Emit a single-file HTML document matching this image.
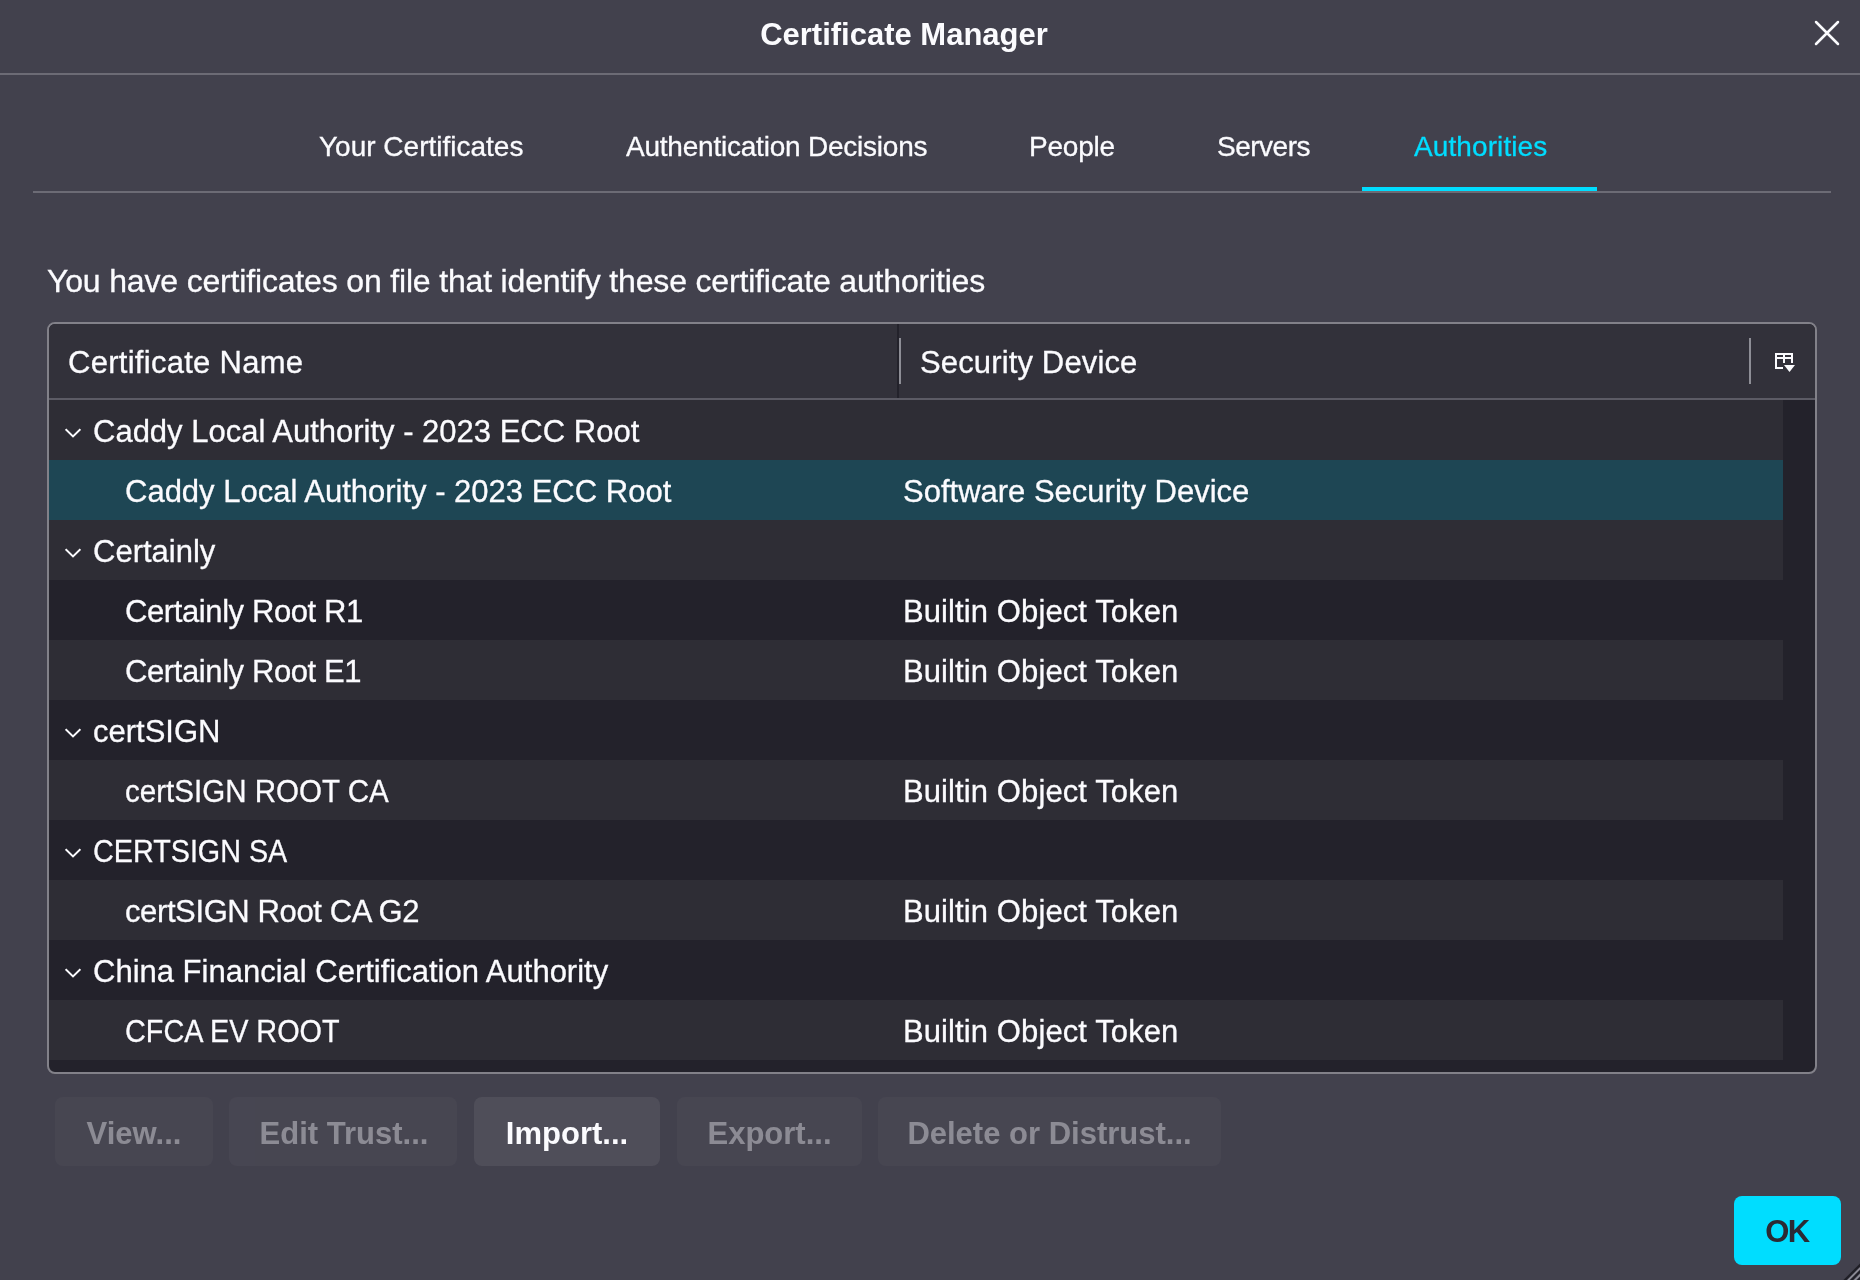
<!DOCTYPE html>
<html><head><meta charset="utf-8">
<style>
*{box-sizing:border-box;margin:0;padding:0}
html,body{width:1860px;height:1280px;overflow:hidden;background:#42414d;-webkit-font-smoothing:antialiased;-webkit-text-stroke:0.3px currentColor;font-family:"Liberation Sans",sans-serif;color:#fbfbfe}
#root{position:absolute;left:0;top:0;width:1860px;height:1280px;will-change:transform;background:#42414d}
.abs{position:absolute;white-space:nowrap}
#title{left:0;width:1808px;text-align:center;top:15px;font-size:31px;font-weight:700;-webkit-text-stroke:0;line-height:40px}
#close{left:1813px;top:19px}
#sep{left:0;top:73px;width:1860px;height:2px;background:#6c6b75}
.tab{top:131px;font-size:28px;line-height:32px}
#tabline{left:33px;top:191px;width:1798px;height:2px;background:#6c6b75}
#tabul{left:1362px;top:187px;width:235px;height:4px;background:#00ddff}
#desc{left:47px;top:263px;font-size:32px;line-height:36px;letter-spacing:-0.17px}
#tree{left:47px;top:322px;width:1770px;height:752px;border:2px solid #828189;border-radius:8px;background:#23222b;overflow:hidden}
#thead{position:absolute;left:0;top:0;width:1766px;height:76px;background:#32313a;border-bottom:2px solid #5c5b65}
.hcell{position:absolute;top:2px;height:74px;font-size:31px;line-height:74px}
.row{position:absolute;left:0;width:1734px;height:60px;font-size:31px;line-height:60px}
.odd{background:#2e2d35}
.sel{background:#1e4654}
.c1{position:absolute;left:76px;top:2px}
.c1g{position:absolute;left:44px;top:2px}
.c2{position:absolute;left:854px;top:2px}
.chev{position:absolute;left:16px;top:28px}
.btn{-webkit-text-stroke:0;position:absolute;top:1097px;height:69px;border-radius:8px;background:#4f4e59;font-size:31px;font-weight:700;line-height:73px;text-align:center}
.dis{opacity:.4}
#ok{-webkit-text-stroke:0;position:absolute;left:1734px;top:1196px;width:107px;height:69px;border-radius:8px;background:#00ddff;color:#2b2a33;font-size:31px;font-weight:700;line-height:71px;text-align:center;letter-spacing:-1.5px;text-indent:-1px}
</style></head>
<body>
<div id="root">
<div class="abs" id="title">Certificate Manager</div>
<svg class="abs" id="close" width="28" height="28" viewBox="0 0 28 28"><path d="M3 3L25 25M25 3L3 25" stroke="#fbfbfe" stroke-width="2.5" stroke-linecap="round"/></svg>
<div class="abs" id="sep"></div>

<div class="abs tab" style="left:319px">Your Certificates</div>
<div class="abs tab" style="left:626px;letter-spacing:-0.22px">Authentication Decisions</div>
<div class="abs tab" style="left:1029px;letter-spacing:-0.2px">People</div>
<div class="abs tab" style="left:1217px;letter-spacing:-0.5px">Servers</div>
<div class="abs tab" style="left:1414px;color:#00ddff;letter-spacing:0.1px">Authorities</div>
<div class="abs" id="tabline"></div>
<div class="abs" id="tabul"></div>

<div class="abs" id="desc">You have certificates on file that identify these certificate authorities</div>

<div class="abs" id="tree">
  <div id="thead">
    <div class="hcell" style="left:19px;letter-spacing:0.28px">Certificate Name</div>
    <div class="hcell" style="left:871px;letter-spacing:0.14px">Security Device</div>
    <div style="position:absolute;left:848px;top:0;width:2px;height:74px;background:#23222b"></div>
    <div style="position:absolute;left:850px;top:14px;width:2px;height:46px;background:#8e8e96"></div>
    <div style="position:absolute;left:1700px;top:14px;width:2px;height:46px;background:#8e8e96"></div>
    <svg style="position:absolute;left:1726px;top:29px" width="22" height="20" viewBox="0 0 22 20"><path fill="#fbfbfe" d="M0 0H18V10H16V6H10V10H8V6H2V14H8V16H0Z M2 2V4H8V2Z M10 2V4H16V2Z"/><path fill="#fbfbfe" d="M9 12H20L14.5 19Z"/></svg>
  </div>
  <div class="row odd" style="top:76px"><svg class="chev" width="16" height="10" viewBox="0 0 16 10"><path d="M0.6 1.1L8 8.4L15.4 1.1" stroke="#fbfbfe" stroke-width="2" fill="none"/></svg><span class="c1g">Caddy Local Authority - 2023 ECC Root</span></div>
  <div class="row sel" style="top:136px"><span class="c1">Caddy Local Authority - 2023 ECC Root</span><span class="c2">Software Security Device</span></div>
  <div class="row odd" style="top:196px"><svg class="chev" width="16" height="10" viewBox="0 0 16 10"><path d="M0.6 1.1L8 8.4L15.4 1.1" stroke="#fbfbfe" stroke-width="2" fill="none"/></svg><span class="c1g">Certainly</span></div>
  <div class="row" style="top:256px"><span class="c1" style="letter-spacing:-0.4px">Certainly Root R1</span><span class="c2" style="letter-spacing:0.1px">Builtin Object Token</span></div>
  <div class="row odd" style="top:316px"><span class="c1" style="letter-spacing:-0.4px">Certainly Root E1</span><span class="c2" style="letter-spacing:0.1px">Builtin Object Token</span></div>
  <div class="row" style="top:376px"><svg class="chev" width="16" height="10" viewBox="0 0 16 10"><path d="M0.6 1.1L8 8.4L15.4 1.1" stroke="#fbfbfe" stroke-width="2" fill="none"/></svg><span class="c1g">certSIGN</span></div>
  <div class="row odd" style="top:436px"><span class="c1" style="transform:scaleX(0.953);transform-origin:0 0">certSIGN ROOT CA</span><span class="c2" style="letter-spacing:0.1px">Builtin Object Token</span></div>
  <div class="row" style="top:496px"><svg class="chev" width="16" height="10" viewBox="0 0 16 10"><path d="M0.6 1.1L8 8.4L15.4 1.1" stroke="#fbfbfe" stroke-width="2" fill="none"/></svg><span class="c1g" style="transform:scaleX(0.927);transform-origin:0 0">CERTSIGN SA</span></div>
  <div class="row odd" style="top:556px"><span class="c1" style="letter-spacing:-0.39px">certSIGN Root CA G2</span><span class="c2" style="letter-spacing:0.1px">Builtin Object Token</span></div>
  <div class="row" style="top:616px"><svg class="chev" width="16" height="10" viewBox="0 0 16 10"><path d="M0.6 1.1L8 8.4L15.4 1.1" stroke="#fbfbfe" stroke-width="2" fill="none"/></svg><span class="c1g">China Financial Certification Authority</span></div>
  <div class="row odd" style="top:676px"><span class="c1" style="transform:scaleX(0.93);transform-origin:0 0">CFCA EV ROOT</span><span class="c2" style="letter-spacing:0.1px">Builtin Object Token</span></div>
</div>

<div class="btn dis" style="left:55px;width:158px">View...</div>
<div class="btn dis" style="left:229px;width:228px;text-indent:2px">Edit Trust...</div>
<div class="btn" style="left:474px;width:186px">Import...</div>
<div class="btn dis" style="left:677px;width:185px">Export...</div>
<div class="btn dis" style="left:878px;width:343px">Delete or Distrust...</div>
<div id="ok">OK</div>
<svg class="abs" style="left:1836px;top:1256px" width="24" height="24" viewBox="0 0 24 24"><path d="M8 25L25 8" stroke="#1f1e26" stroke-width="2.2"/><path d="M11.3 25L25 11.3" stroke="#8f8e98" stroke-width="1.6"/><path d="M14.6 25L25 14.6" stroke="#1f1e26" stroke-width="1.8"/><path d="M18 25L25 18" stroke="#8f8e98" stroke-width="1.6"/><path d="M21.3 25L25 21.3" stroke="#1f1e26" stroke-width="1.8"/></svg>
</div>
</body></html>
